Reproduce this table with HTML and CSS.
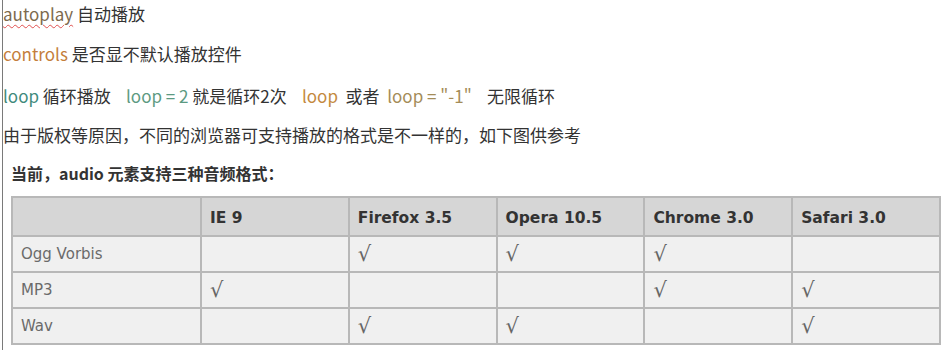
FILE: index.html
```html
<!DOCTYPE html>
<html lang="zh">
<head>
<meta charset="utf-8">
<link rel="stylesheet" href="styles.css">
</head>
<body>
<div class="page">
  <p class="line l1"><span class="kw-a spell">autoplay</span> 自动播放</p>
  <p class="line l2"><span class="kw-c">controls</span> 是否显不默认播放控件</p>
  <p class="line l3"><span class="kw-g">loop</span> 循环播放&nbsp;&nbsp;&nbsp;&nbsp;<span class="kw-g2">loop = 2</span> 就是循环2次&nbsp;&nbsp;&nbsp;&nbsp;<span class="kw-o">loop</span>&nbsp;&nbsp;或者&nbsp;&nbsp;<span class="kw-y">loop = "-1"</span>&nbsp;&nbsp;&nbsp;&nbsp;无限循环</p>
  <p class="line l4">由于版权等原因，不同的浏览器可支持播放的格式是不一样的，如下图供参考</p>
  <p class="caption">当前，audio 元素支持三种音频格式：</p>
  <table class="fmt">
    <thead>
      <tr><th></th><th>IE 9</th><th>Firefox 3.5</th><th>Opera 10.5</th><th>Chrome 3.0</th><th>Safari 3.0</th></tr>
    </thead>
    <tbody>
      <tr><td>Ogg Vorbis</td><td></td><td class="ok">√</td><td class="ok">√</td><td class="ok">√</td><td></td></tr>
      <tr><td>MP3</td><td class="ok">√</td><td></td><td></td><td class="ok">√</td><td class="ok">√</td></tr>
      <tr><td>Wav</td><td></td><td class="ok">√</td><td class="ok">√</td><td></td><td class="ok">√</td></tr>
    </tbody>
  </table>
</div>
</body>
</html>
```
FILE: styles.css
```css
html, body {
  margin: 0;
  padding: 0;
  background: #ffffff;
}
body {
  width: 946px;
  height: 350px;
  overflow: hidden;
}
.page {
  margin-left: 2px;
  border-left: 1px solid #7a7a7a;
  height: 350px;
  font-family: "Noto Sans CJK SC", "Noto Sans", sans-serif;
  color: #333333;
}
.line {
  margin: 0;
  font-size: 17px;
  line-height: 20px;
  white-space: nowrap;
}
.l1 { padding-top: 4px; }
.l2 { margin-top: 20px; }
.l3 { margin-top: 22px; }
.l4 { margin-top: 19px; font-size: 17px; }
.kw-a { color: #7d6a4e; }
.spell {
  text-decoration: underline wavy #e05050 1px;
  text-underline-offset: 3px;
}
.kw-c { color: #c47e3c; }
.kw-g { color: #3f8a7c; }
.kw-g2 { color: #5c9a82; }
.kw-o { color: #c4893e; }
.kw-y { color: #a48c58; }
.caption {
  margin: 18px 0 0 8px;
  font-size: 16px;
  line-height: 20px;
  font-weight: bold;
  color: #333333;
}
.fmt {
  margin: 13px 0 0 8px;
  border-collapse: collapse;
  border: 2px solid #b8b8b8;
  font-family: "DejaVu Sans", Verdana, sans-serif;
  table-layout: fixed;
  width: 930px;
}
.fmt th, .fmt td {
  border: 2px solid #b8b8b8;
  text-align: left;
  padding: 0 0 0 8px;
  height: 34px;
}
.fmt th:first-child, .fmt td:first-child { width: 179px; }
.fmt th {
  background: #d6d6d6;
  color: #333333;
  font-size: 15.5px;
  font-weight: bold;
  height: 35px;
  padding-top: 2px;
}
.fmt td {
  background: #f0f0f0;
  color: #6a6a6a;
  font-size: 15px;
}
.fmt td.ok {
  font-family: "DejaVu Sans", sans-serif;
  font-size: 21px;
  line-height: 20px;
  color: #666666;
}
```
